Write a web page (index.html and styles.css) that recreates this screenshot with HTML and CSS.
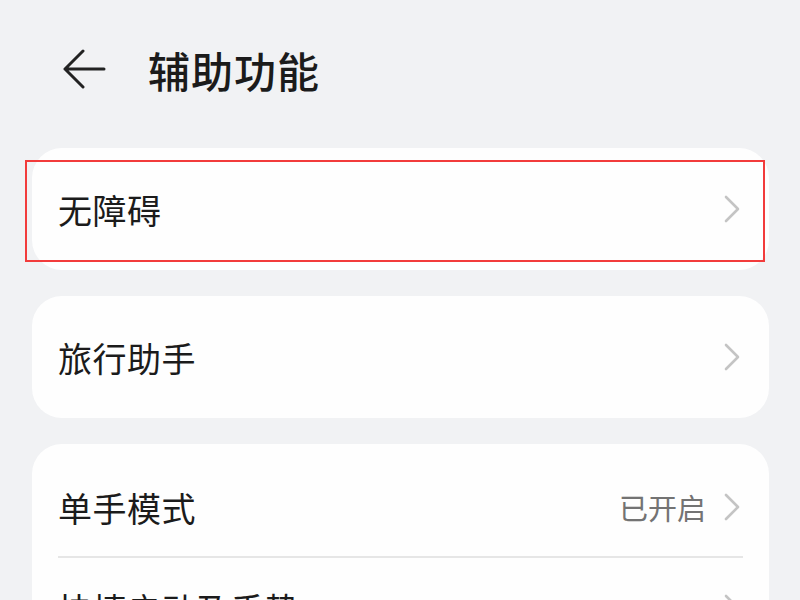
FILE: index.html
```html
<!DOCTYPE html>
<html lang="zh-CN">
<head>
    <meta charset="UTF-8">
    <meta name="viewport" content="width=device-width, initial-scale=1.0">
    <title>辅助功能</title>
    <link rel="stylesheet" href="styles.css">
</head>
<body>
    <div class="header">
        <svg class="back" width="44" height="40" viewBox="0 0 44 40">
            <path d="M42 20 H3 M21 2 L3 20 L21 38" fill="none" stroke="#222" stroke-width="3" stroke-linecap="round" stroke-linejoin="round"/>
        </svg>
        <span class="title">辅助功能</span>
    </div>

    <div class="list">
        <div class="card">
            <div class="row">
                <span class="label">无障碍</span>
                <span class="chevron"><svg width="16" height="28" viewBox="0 0 16 28"><path d="M2 2 L14 14 L2 26" fill="none" stroke="#c4c4c4" stroke-width="2.6" stroke-linecap="round" stroke-linejoin="round"/></svg></span>
            </div>
            <span class="highlight"></span>
        </div>

        <div class="card">
            <div class="row">
                <span class="label">旅行助手</span>
                <span class="chevron"><svg width="16" height="28" viewBox="0 0 16 28"><path d="M2 2 L14 14 L2 26" fill="none" stroke="#c4c4c4" stroke-width="2.6" stroke-linecap="round" stroke-linejoin="round"/></svg></span>
            </div>
        </div>

        <div class="card group">
            <div class="row divided">
                <span class="label">单手模式</span>
                <span class="value">已开启</span>
                <span class="chevron"><svg width="16" height="28" viewBox="0 0 16 28"><path d="M2 2 L14 14 L2 26" fill="none" stroke="#c4c4c4" stroke-width="2.6" stroke-linecap="round" stroke-linejoin="round"/></svg></span>
            </div>
            <div class="row">
                <span class="label">快捷启动及手势</span>
                <span class="chevron"><svg width="16" height="28" viewBox="0 0 16 28"><path d="M2 2 L14 14 L2 26" fill="none" stroke="#c4c4c4" stroke-width="2.6" stroke-linecap="round" stroke-linejoin="round"/></svg></span>
            </div>
        </div>
    </div>
</body>
</html>
```

FILE: styles.css
```css
:root {
    --bg: #f1f2f4;
    --card: #fefefe;
    --text: #1b1b1b;
    --muted: #737373;
    --line: #e6e6e6;
    --red: #f23b3b;
}

html {
    background-color: var(--bg);
    color: var(--text);
    font-family: "Noto Sans CJK SC", "Noto Sans", sans-serif;
}

body {
    margin: 0;
    padding: 0 31px 0 32px;
}

.header {
    height: 148px;
    display: flex;
    flex-direction: row;
    align-items: center;
    padding-left: 30px;
    padding-bottom: 10px;
    box-sizing: border-box;
}

.back { margin-right: 42px; }

.title {
    font-size: 42px;
    font-weight: 500;
    letter-spacing: 1px;
}

.list {
    display: flex;
    flex-direction: column;
    gap: 26px;
}

.card {
    position: relative;
    background-color: var(--card);
    border-radius: 30px;
    padding: 11px 0;
}

.card.group { padding-top: 14px; }

.row {
    height: 100px;
    display: flex;
    flex-direction: row;
    align-items: center;
    margin: 0 26px;
    box-sizing: border-box;
}

.row.divided { border-bottom: 2px solid var(--line); }

.label {
    flex: 1;
    font-size: 34px;
    letter-spacing: 0.5px;
}

.value {
    font-size: 29px;
    color: var(--muted);
    margin-right: 18px;
}

.chevron {
    display: flex;
    margin-right: 3px;
}

/* annotation box drawn over the first card */
.highlight {
    position: absolute;
    top: 12px;
    bottom: 8px;
    left: -7px;
    right: 4px;
    border: 2px solid var(--red);
}
```
